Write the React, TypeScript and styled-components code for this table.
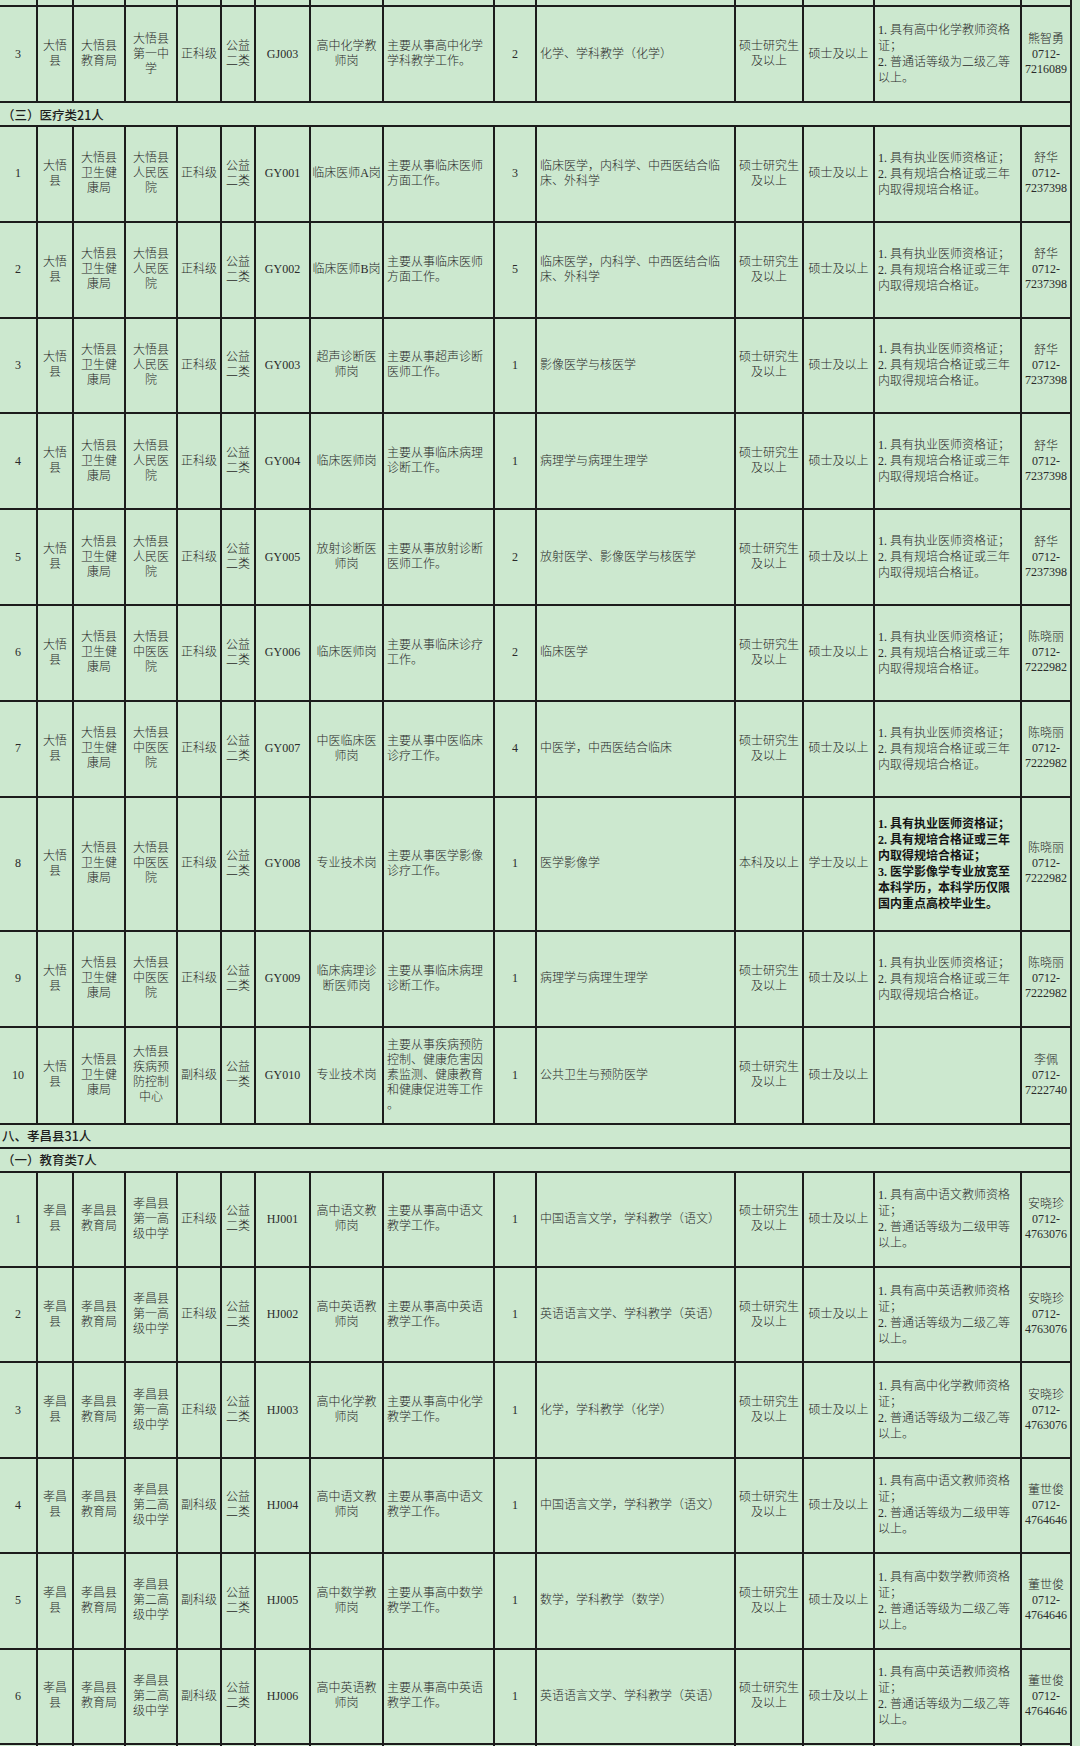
import React from 'react'
import styled, { createGlobalStyle } from 'styled-components'

const GlobalStyle = createGlobalStyle`
  html, body {
    margin: 0;
    padding: 0;
    background: #cce8cf;
    overflow: hidden;
  }
`

const COLS =
  '38px 36px 52px 52px 44px 34px 55px 73px 111px 42px 199px 68px 71px 147px 50px'

const Sheet = styled.div`
  width: 1080px;
  height: 1746px;
  overflow: hidden;
  display: flex;
  flex-direction: column;
  background: #cce8cf;
  font-family: 'Liberation Serif', 'Noto Sans CJK SC', serif;
  font-size: 12px;
  color: #2a2a2a;
`

const Row = styled.div<{ $h: number }>`
  display: grid;
  grid-template-columns: ${COLS};
  width: 1072px;
  height: ${({ $h }) => $h}px;
  flex: none;
  box-sizing: border-box;
  border-bottom: 2px solid #1c1c1c;
`

type Align = 'center' | 'left'

const Cell = styled.div<{ $align?: Align; $bold?: boolean; $lh?: number }>`
  box-sizing: border-box;
  border-right: 2px solid #1c1c1c;
  display: flex;
  align-items: center;
  justify-content: ${({ $align }) => ($align === 'left' ? 'flex-start' : 'center')};
  text-align: ${({ $align }) => ($align === 'left' ? 'left' : 'center')};
  padding: ${({ $align }) => ($align === 'left' ? '0 0 0 3px' : '0')};
  white-space: pre-line;
  line-height: ${({ $lh }) => $lh ?? 15}px;
  font-weight: ${({ $bold }) => ($bold ? 700 : 300)};
  color: ${({ $bold }) => ($bold ? '#141414' : '#2a2a2a')};
  overflow: hidden;
`

const Section = styled.div<{ $h: number }>`
  width: 1072px;
  height: ${({ $h }) => $h}px;
  flex: none;
  box-sizing: border-box;
  border-right: 2px solid #1c1c1c;
  border-bottom: 2px solid #1c1c1c;
  display: flex;
  align-items: center;
  padding-left: 2px;
  font-family: 'Noto Sans CJK SC', 'Noto Sans', sans-serif;
  font-size: 12.5px;
  font-weight: 500;
  color: #1e1e1e;
`

type Job = {
  no: string
  county: string
  dept: string
  unit: string
  level: string
  kind: string
  code: string
  post: string
  desc: string
  count: string
  major: string
  edu: string
  degree: string
  req: string
  contact: string
  h: number
  boldReq?: boolean
}

const EDU = '硕士研究生\n及以上'
const DEG = '硕士及以上'
const DOC = '1. 具有执业医师资格证；\n2. 具有规培合格证或三年\n内取得规培合格证。'
const SHU = '舒华\n0712-\n7237398'
const CHEN = '陈晓丽\n0712-\n7222982'
const AN = '安晓珍\n0712-\n4763076'
const DONG = '董世俊\n0712-\n4764646'

const daWuHealth = {
  county: '大悟\n县',
  dept: '大悟县\n卫生健\n康局',
  level: '正科级',
  kind: '公益\n二类',
  edu: EDU,
  degree: DEG,
}

const teach = (subject: string, grade: string) =>
  `1. 具有高中${subject}教师资格\n证；\n2. 普通话等级为二级${grade}等\n以上。`

const xcEdu = {
  county: '孝昌\n县',
  dept: '孝昌县\n教育局',
  kind: '公益\n二类',
  edu: EDU,
  degree: DEG,
  count: '1',
  h: 95.4,
}

const part1: Job[] = [
  { no: '1', ...daWuHealth, unit: '大悟县\n人民医\n院', code: 'GY001', post: '临床医师A岗', desc: '主要从事临床医师\n方面工作。', count: '3', major: '临床医学，内科学、中西医结合临\n床、外科学', req: DOC, contact: SHU, h: 95.8 },
  { no: '2', ...daWuHealth, unit: '大悟县\n人民医\n院', code: 'GY002', post: '临床医师B岗', desc: '主要从事临床医师\n方面工作。', count: '5', major: '临床医学，内科学、中西医结合临\n床、外科学', req: DOC, contact: SHU, h: 95.8 },
  { no: '3', ...daWuHealth, unit: '大悟县\n人民医\n院', code: 'GY003', post: '超声诊断医\n师岗', desc: '主要从事超声诊断\n医师工作。', count: '1', major: '影像医学与核医学', req: DOC, contact: SHU, h: 95.8 },
  { no: '4', ...daWuHealth, unit: '大悟县\n人民医\n院', code: 'GY004', post: '临床医师岗', desc: '主要从事临床病理\n诊断工作。', count: '1', major: '病理学与病理生理学', req: DOC, contact: SHU, h: 95.8 },
  { no: '5', ...daWuHealth, unit: '大悟县\n人民医\n院', code: 'GY005', post: '放射诊断医\n师岗', desc: '主要从事放射诊断\n医师工作。', count: '2', major: '放射医学、影像医学与核医学', req: DOC, contact: SHU, h: 95.8 },
  { no: '6', ...daWuHealth, unit: '大悟县\n中医医\n院', code: 'GY006', post: '临床医师岗', desc: '主要从事临床诊疗\n工作。', count: '2', major: '临床医学', req: DOC, contact: CHEN, h: 95.8 },
  { no: '7', ...daWuHealth, unit: '大悟县\n中医医\n院', code: 'GY007', post: '中医临床医\n师岗', desc: '主要从事中医临床\n诊疗工作。', count: '4', major: '中医学，中西医结合临床', req: DOC, contact: CHEN, h: 95.8 },
  {
    no: '8', ...daWuHealth, unit: '大悟县\n中医医\n院', code: 'GY008', post: '专业技术岗', desc: '主要从事医学影像\n诊疗工作。', count: '1', major: '医学影像学',
    edu: '本科及以上', degree: '学士及以上',
    req: '1. 具有执业医师资格证；\n2. 具有规培合格证或三年\n内取得规培合格证；\n3. 医学影像学专业放宽至\n本科学历，本科学历仅限\n国内重点高校毕业生。',
    boldReq: true, contact: CHEN, h: 134,
  },
  { no: '9', ...daWuHealth, unit: '大悟县\n中医医\n院', code: 'GY009', post: '临床病理诊\n断医师岗', desc: '主要从事临床病理\n诊断工作。', count: '1', major: '病理学与病理生理学', req: DOC, contact: CHEN, h: 96 },
  {
    no: '10', ...daWuHealth, unit: '大悟县\n疾病预\n防控制\n中心', level: '副科级', kind: '公益\n一类', code: 'GY010', post: '专业技术岗',
    desc: '主要从事疾病预防\n控制、健康危害因\n素监测、健康教育\n和健康促进等工作\n。', count: '1', major: '公共卫生与预防医学', req: '', contact: '李佩\n0712-\n7222740', h: 97,
  },
]

const part2: Job[] = [
  { no: '1', ...xcEdu, unit: '孝昌县\n第一高\n级中学', level: '正科级', code: 'HJ001', post: '高中语文教\n师岗', desc: '主要从事高中语文\n教学工作。', major: '中国语言文学，学科教学（语文）', req: teach('语文', '甲'), contact: AN },
  { no: '2', ...xcEdu, unit: '孝昌县\n第一高\n级中学', level: '正科级', code: 'HJ002', post: '高中英语教\n师岗', desc: '主要从事高中英语\n教学工作。', major: '英语语言文学、学科教学（英语）', req: teach('英语', '乙'), contact: AN },
  { no: '3', ...xcEdu, unit: '孝昌县\n第一高\n级中学', level: '正科级', code: 'HJ003', post: '高中化学教\n师岗', desc: '主要从事高中化学\n教学工作。', major: '化学，学科教学（化学）', req: teach('化学', '乙'), contact: AN },
  { no: '4', ...xcEdu, unit: '孝昌县\n第二高\n级中学', level: '副科级', code: 'HJ004', post: '高中语文教\n师岗', desc: '主要从事高中语文\n教学工作。', major: '中国语言文学，学科教学（语文）', req: teach('语文', '甲'), contact: DONG },
  { no: '5', ...xcEdu, unit: '孝昌县\n第二高\n级中学', level: '副科级', code: 'HJ005', post: '高中数学教\n师岗', desc: '主要从事高中数学\n教学工作。', major: '数学，学科教学（数学）', req: teach('数学', '乙'), contact: DONG },
  { no: '6', ...xcEdu, unit: '孝昌县\n第二高\n级中学', level: '副科级', code: 'HJ006', post: '高中英语教\n师岗', desc: '主要从事高中英语\n教学工作。', major: '英语语言文学、学科教学（英语）', req: teach('英语', '乙'), contact: DONG },
]

const topJob: Job = {
  no: '3', county: '大悟\n县', dept: '大悟县\n教育局', unit: '大悟县\n第一中\n学', level: '正科级', kind: '公益\n二类',
  code: 'GJ003', post: '高中化学教\n师岗', desc: '主要从事高中化学\n学科教学工作。', count: '2', major: '化学、学科教学（化学）',
  edu: EDU, degree: DEG, req: teach('化学', '乙'), contact: '熊智勇\n0712-\n7216089', h: 96,
}

const JobRow = ({ job }: { job: Job }) => (
  <Row $h={job.h}>
    <Cell>{job.no}</Cell>
    <Cell>{job.county}</Cell>
    <Cell>{job.dept}</Cell>
    <Cell>{job.unit}</Cell>
    <Cell>{job.level}</Cell>
    <Cell>{job.kind}</Cell>
    <Cell>{job.code}</Cell>
    <Cell>{job.post}</Cell>
    <Cell $align="left">{job.desc}</Cell>
    <Cell>{job.count}</Cell>
    <Cell $align="left">{job.major}</Cell>
    <Cell>{job.edu}</Cell>
    <Cell>{job.degree}</Cell>
    <Cell $align="left" $lh={16} $bold={job.boldReq}>{job.req}</Cell>
    <Cell>{job.contact}</Cell>
  </Row>
)

const EmptyRow = ({ h }: { h: number }) => (
  <Row $h={h}>
    {Array.from({ length: 15 }, (_, i) => (
      <Cell key={i} />
    ))}
  </Row>
)

export default function App() {
  return (
    <>
      <GlobalStyle />
      <Sheet>
        <EmptyRow h={7} />
        <JobRow job={topJob} />
        <Section $h={24}>（三）医疗类21人</Section>
        {part1.map((j) => (
          <JobRow key={j.code} job={j} />
        ))}
        <Section $h={24}>八、孝昌县31人</Section>
        <Section $h={24}>（一）教育类7人</Section>
        {part2.map((j) => (
          <JobRow key={j.code} job={j} />
        ))}
        <EmptyRow h={20} />
      </Sheet>
    </>
  )
}
